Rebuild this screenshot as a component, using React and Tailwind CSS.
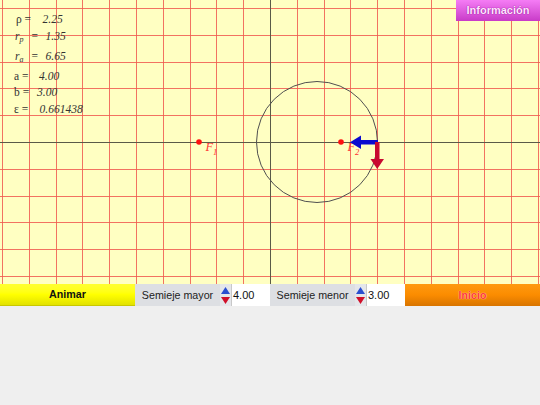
import React from "react";

const serif = { fontFamily: '"Liberation Serif", "Times New Roman", serif' };

function Grid() {
  const xs = [];
  const ys = [];
  for (let k = -10; k <= 10; k++) {
    const x = Math.round(270 + k * 26.8) + 0.5;
    if (x >= 0 && x <= 540 && k !== 0) xs.push(x);
    const y = Math.round(142 + k * 26.8) + 0.5;
    if (y >= 0 && y <= 284 && k !== 0) ys.push(y);
  }
  return (
    <svg width="540" height="284" className="absolute left-0 top-0">
      {xs.map((x) => (
        <line key={"x" + x} x1={x} y1={0} x2={x} y2={284} stroke="#f05a50" strokeOpacity="0.85" strokeWidth="1" />
      ))}
      {ys.map((y) => (
        <line key={"y" + y} x1={0} y1={y} x2={540} y2={y} stroke="#f05a50" strokeOpacity="0.85" strokeWidth="1" />
      ))}
      <line x1={270.5} y1={0} x2={270.5} y2={284} stroke="#5a5a48" strokeWidth="1" />
      <line x1={0} y1={142.5} x2={540} y2={142.5} stroke="#5a5a48" strokeWidth="1" />
      <circle cx={317} cy={142} r={60.5} fill="none" stroke="#505050" strokeWidth="1" />
      <circle cx={199} cy={142} r={2.8} fill="#ff1010" />
      <circle cx={341} cy={142} r={2.8} fill="#ff1010" />
      <text x={205.5} y={151} fontSize="12.5" fontStyle="italic" fill="#ff3030" fontFamily="Liberation Serif, serif">F</text>
      <text x={213} y={154.5} fontSize="8.5" fontStyle="italic" fill="#ff3030" fontFamily="Liberation Serif, serif">1</text>
      <text x={347.5} y={151} fontSize="12.5" fontStyle="italic" fill="#ff3030" fontFamily="Liberation Serif, serif">F</text>
      <text x={355} y={154.5} fontSize="8.5" fontStyle="italic" fill="#ff3030" fontFamily="Liberation Serif, serif">2</text>
      <rect x={359} y={140} width={19} height={4.5} fill="#0a0ad0" />
      <polygon points="350,142.2 361,135.5 361,149" fill="#0a0ad0" />
      <rect x={375} y={142} width={4.5} height={19} fill="#c80a30" />
      <polygon points="370.5,159 384,159 377.2,169" fill="#c80a30" />
    </svg>
  );
}

function Sym({ base, sub }) {
  return (
    <span className="italic">
      {base}
      <sub className="text-[8px]">{sub}</sub>
    </span>
  );
}

function Row({ label, value, labelW, h }) {
  return (
    <div className={"flex items-start " + h}>
      <span className={"shrink-0 " + labelW}>{label}</span>
      <span className="italic">{value}</span>
    </div>
  );
}

function Spinner() {
  return (
    <div className="flex h-full w-[11px] flex-col items-center justify-center gap-[3px] bg-[#e4e6ea]">
      <svg width="9" height="7" viewBox="0 0 9 7">
        <polygon points="4.5,0 9,7 0,7" fill="#2a4fd0" />
      </svg>
      <svg width="9" height="7" viewBox="0 0 9 7">
        <polygon points="0,0 9,0 4.5,7" fill="#d0102a" />
      </svg>
    </div>
  );
}

function Field({ label, value }) {
  return (
    <div className="flex h-full w-[135px] items-center bg-[#dddfe3]">
      <div className="flex-1 text-center text-[10.7px] text-[#222]">{label}</div>
      <Spinner />
      <div className="flex h-full w-[39px] items-center border-l border-[#c8c8c8] bg-white pl-[1px] text-[11px] text-[#111]">
        {value}
      </div>
    </div>
  );
}

export default function App() {
  return (
    <div className="h-[405px] w-[540px] overflow-hidden bg-[#efefef]" style={{ fontFamily: '"Liberation Sans", Arial, sans-serif' }}>
      <div className="relative h-[284px] w-[540px] overflow-hidden bg-[#ffffc2]">
        <Grid />
        <div className="absolute left-[14px] top-[13px] flex flex-col text-[11.5px] leading-[13px] text-[#333]" style={serif}>
          <Row h="h-[17px]" labelW="w-[28.5px] pl-[2px]" label="ρ =" value="2.25" />
          <Row
            h="h-[20px]"
            labelW="w-[31.5px] pl-[1px]"
            label={
              <span className="flex gap-[8px]">
                <Sym base="r" sub="p" />
                <span>=</span>
              </span>
            }
            value="1.35"
          />
          <Row
            h="h-[20px]"
            labelW="w-[31.5px] pl-[1px]"
            label={
              <span className="flex gap-[8px]">
                <Sym base="r" sub="a" />
                <span>=</span>
              </span>
            }
            value="6.65"
          />
          <Row h="h-[16px]" labelW="w-[25px]" label="a =" value="4.00" />
          <Row h="h-[16.5px]" labelW="w-[23px]" label="b =" value="3.00" />
          <Row h="h-[16px]" labelW="w-[25.5px]" label="ε =" value="0.661438" />
        </div>
        <div
          className="absolute right-0 top-0 flex h-[21px] w-[84px] items-center justify-center bg-gradient-to-b from-[#f57cf5] to-[#c83ac8] text-[11px] font-bold text-[#ffe6ff]"
          style={{ textShadow: "0 0 1px #a0189f, 0 0 1px #a0189f" }}
        >
          Información
        </div>
      </div>
      <div className="flex h-[22px] w-[540px]">
        <div className="flex h-full w-[135px] items-center justify-center border-b border-[#c8c800] bg-gradient-to-b from-[#ffff30] via-[#ffff00] to-[#e2e200] text-[10.7px] font-bold text-[#111]">
          Animar
        </div>
        <Field label="Semieje mayor" value="4.00" />
        <Field label="Semieje menor" value="3.00" />
        <div
          className="flex h-full w-[135px] items-center justify-center bg-gradient-to-b from-[#ff9a10] via-[#fb8c00] to-[#d87400] text-[10.7px] font-bold text-[#ff3a3a]"
          style={{ textShadow: "0 0 1px #ffd0a0, 0 0 1px #ffd0a0" }}
        >
          Inicio
        </div>
      </div>
    </div>
  );
}
